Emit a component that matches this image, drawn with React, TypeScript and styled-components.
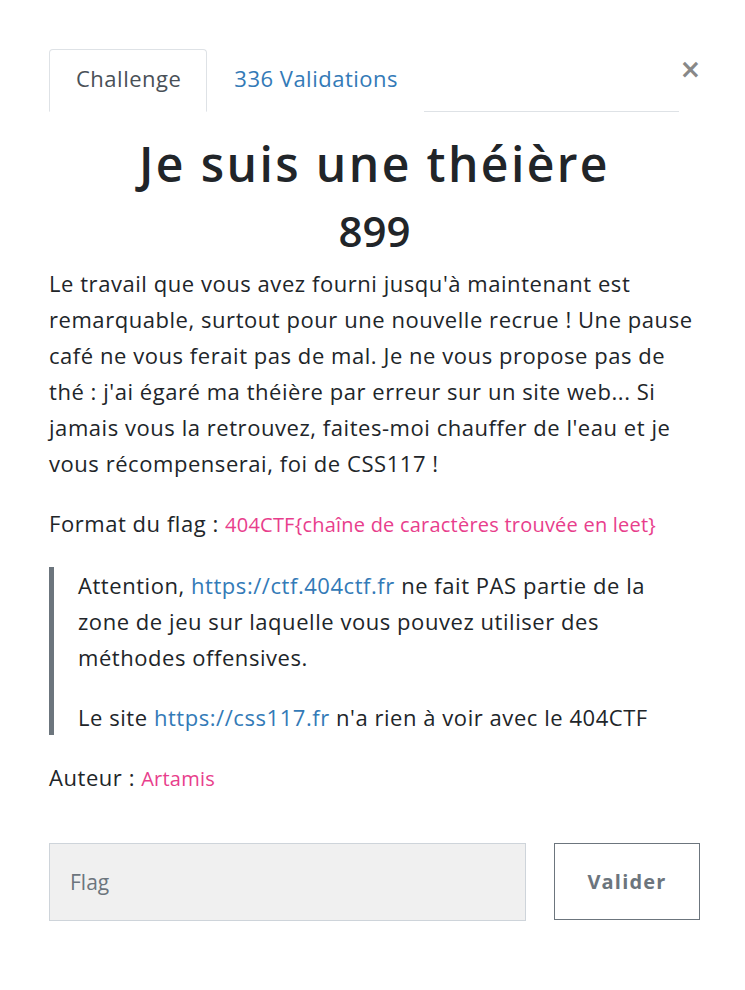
import React from "react";
import styled, { createGlobalStyle } from "styled-components";

const Global = createGlobalStyle`
  body {
    margin: 0;
    background: #fff;
    font-family: "Open Sans", "Noto Sans", sans-serif;
    color: #212529;
  }
`;

const Modal = styled.div`
  width: 651px;
  padding: 49px 0 60px 49px;
  box-sizing: content-box;
`;

const Header = styled.div`
  display: flex;
  align-items: flex-start;
`;

const Tabs = styled.nav`
  flex: 1;
  display: flex;
  border-bottom: 1px solid #dee2e6;
`;

const Tab = styled.div<{ $active?: boolean }>`
  height: 63px;
  box-sizing: border-box;
  display: flex;
  align-items: center;
  padding: 0 25px 5px 26px;
  font-size: 22px;
  letter-spacing: 0.5px;
  margin-bottom: -1px;
  border: 1px solid ${(p) => (p.$active ? "#dee2e6" : "transparent")};
  border-bottom-color: ${(p) => (p.$active ? "#fff" : "transparent")};
  border-radius: 4px 4px 0 0;
  background: #fff;
  color: ${(p) => (p.$active ? "#495057" : "#337ab7")};
`;

const Close = styled.button`
  width: 19px;
  margin: 7px 0 0 2px;
  padding: 0;
  border: none;
  background: none;
  color: #888;
  font-family: "DejaVu Sans", sans-serif;
  font-size: 26px;
  font-weight: bold;
  line-height: 1;
  display: flex;
  justify-content: center;
`;

const Title = styled.h2`
  margin: 23px 0 0;
  text-align: center;
  font-size: 48px;
  font-weight: 600;
  letter-spacing: 2.4px;
  line-height: 1.2;
  color: #212529;
`;

const Points = styled.h3`
  margin: 13px 0 9px;
  text-align: center;
  font-size: 42px;
  font-weight: 600;
  line-height: 1.2;
`;

const Para = styled.p`
  margin: 0 0 24px;
  font-size: 22px;
  letter-spacing: 0.55px;
  line-height: 36px;
`;

const Code = styled.code`
  font-family: inherit;
  font-size: 20px;
  letter-spacing: 0.22px;
  color: #e83e8c;
`;

const Link = styled.a`
  color: #337ab7;
  text-decoration: none;
`;

const Quote = styled.blockquote`
  margin: 0 0 24px;
  padding: 0 0 0 24px;
  border-left: 5px solid #6c757d;
  & > p:last-child {
    margin-bottom: 0;
  }
`;

const Form = styled.div`
  display: flex;
  gap: 28px;
  margin-top: 46px;
`;

const Input = styled.input`
  flex: 1;
  height: 78px;
  box-sizing: border-box;
  background: #f0f0f0;
  border: 1px solid #ced4da;
  padding: 0 20px;
  font-family: inherit;
  font-size: 21px;
  color: #495057;
  &::placeholder {
    color: #6c757d;
  }
`;

const Button = styled.button`
  width: 146px;
  height: 77px;
  box-sizing: border-box;
  background: #fff;
  border: 1px solid #6c757d;
  font-family: inherit;
  font-size: 20px;
  font-weight: 700;
  letter-spacing: 1.2px;
  color: #6c757d;
`;

export default function App() {
  return (
    <>
      <Global />
      <Modal>
        <Header>
          <Tabs>
            <Tab $active>Challenge</Tab>
            <Tab>336 Validations</Tab>
          </Tabs>
          <Close aria-label="Close">×</Close>
        </Header>
        <Title>Je suis une théière</Title>
        <Points>899</Points>
        <Para>
          Le travail que vous avez fourni jusqu'à maintenant est remarquable,
          surtout pour une nouvelle recrue ! Une pause café ne vous ferait pas
          de mal. Je ne vous propose pas de thé : j'ai égaré ma théière par
          erreur sur un site web... Si jamais vous la retrouvez, faites-moi
          chauffer de l'eau et je vous récompenserai, foi de CSS117 !
        </Para>
        <Para>
          Format du flag : <Code>404CTF{"{"}chaîne de caractères trouvée en leet{"}"}</Code>
        </Para>
        <Quote>
          <Para>
            Attention, <Link href="#">https://ctf.404ctf.fr</Link> ne fait PAS
            partie de la zone de jeu sur laquelle vous pouvez utiliser des
            méthodes offensives.
          </Para>
          <Para>
            Le site <Link href="#">https://css117.fr</Link> n'a rien à voir avec
            le 404CTF
          </Para>
        </Quote>
        <Para>
          Auteur : <Code>Artamis</Code>
        </Para>
        <Form>
          <Input placeholder="Flag" />
          <Button>Valider</Button>
        </Form>
      </Modal>
    </>
  );
}
